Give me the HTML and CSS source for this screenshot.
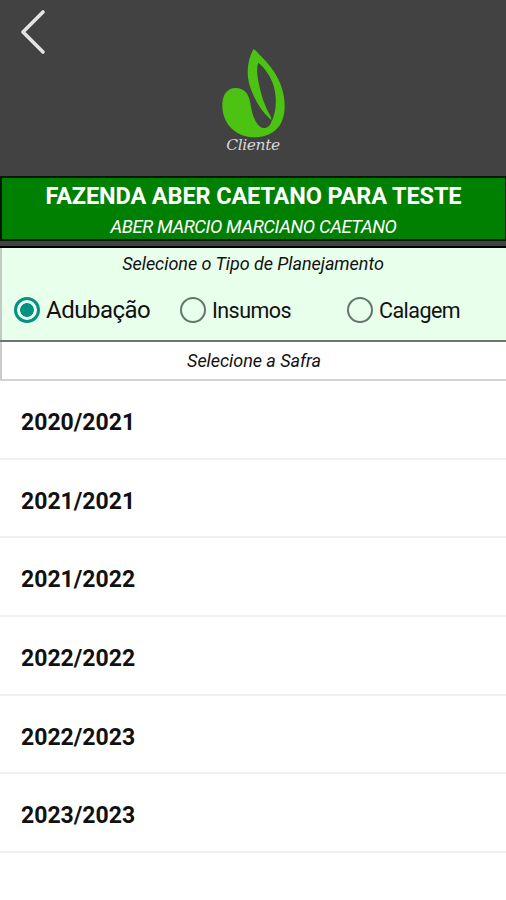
FILE: index.html
```html
<!DOCTYPE html>
<html lang="pt-BR">
  <head>
    <meta charset="UTF-8" />
    <meta name="viewport" content="width=device-width, initial-scale=1.0" />
    <title>Planejamento</title>
    <link rel="stylesheet" href="styles.css">
  </head>
  <body>
    <header class="header">
      <a class="back" href="#" aria-label="Voltar">
        <svg width="28" height="46" viewBox="0 0 28 46">
          <path d="M23 3 L3 23 L23 43" />
        </svg>
      </a>
      <div class="logo">
        <svg width="66" height="90" viewBox="60 39 198 270">
          <path fill-rule="evenodd" d="M161 41 C185 66 212 90 231 125 C253 165 259 212 250 246 C241 284 207 307 163 307 C112 307 68 271 67 213 C66 178 83 159 107 159 C134 159 147 178 151 205 C155 232 161 253 174 269 C185 283 204 284 213 264 C217 257 213 255 208 250 C180 224 158 184 147 145 C139 112 143 72 161 41 Z M175 83 C169 97 171 121 176 143 C183 177 193 211 211 242 C214 247 215 257 213 264 C229 233 232 192 221 153 C213 125 195 99 175 83 Z" />
        </svg>
        <span class="logo-text">Cliente</span>
      </div>
    </header>

    <section class="farm">
      <h1>FAZENDA ABER CAETANO PARA TESTE</h1>
      <p>ABER MARCIO MARCIANO CAETANO</p>
    </section>

    <form class="plan">
      <p class="plan-title">Selecione o Tipo de Planejamento</p>
      <div class="radio-group">
        <label class="large"><input type="radio" name="tipo" value="adubacao" checked /><span>Adubação</span></label>
        <label><input type="radio" name="tipo" value="insumos" /><span>Insumos</span></label>
        <label><input type="radio" name="tipo" value="calagem" /><span>Calagem</span></label>
      </div>
    </form>

    <p class="season-title"><span>Selecione a Safra</span></p>
    <ul class="seasons">
      <li>2020/2021</li>
      <li>2021/2021</li>
      <li>2021/2022</li>
      <li>2022/2022</li>
      <li>2022/2023</li>
      <li>2023/2023</li>
    </ul>
  </body>
</html>
```
FILE: styles.css
```css
* {
  box-sizing: border-box;
  margin: 0;
  padding: 0;
}

body {
  font-family: Roboto, sans-serif;
  background-color: #fff;
  color: #111;
}

.header {
  display: grid;
  grid-template-columns: 60px 1fr 60px;
  height: 176px;
  background-color: #424242;
}

.back {
  padding: 9px 0 0 20px;
}

.back svg {
  display: block;
  fill: none;
  stroke: #e4e4e4;
  stroke-width: 3.6;
  stroke-linecap: round;
  stroke-linejoin: round;
}

.logo {
  display: flex;
  flex-direction: column;
  align-items: center;
  padding-top: 48px;
}

.logo svg {
  fill: #4cc313;
}

.logo-text {
  margin-top: -2px;
  font: italic 15.5px/18px "DejaVu Serif", serif;
  letter-spacing: -0.4px;
  color: #d8d8d8;
}

.farm {
  height: 65px;
  padding-top: 6px;
  background-color: #008000;
  border: 2px solid #061806;
  border-right-width: 1px;
  text-align: center;
  color: #fff;
}

.farm h1 {
  font-size: 23.5px;
  line-height: 24px;
  font-weight: 700;
  letter-spacing: -0.12px;
}

.farm p {
  margin-top: 8px;
  font-size: 18.5px;
  line-height: 22px;
  font-style: italic;
  letter-spacing: -0.43px;
}

.plan {
  height: 101px;
  padding-top: 6px;
  background-color: #e8ffec;
  border-top: 5px solid #424242;
  border-bottom: 2px solid #6b776d;
  box-shadow: inset 0 2px #000, inset 2px 0 #c0cbc2;
}

.plan-title,
.season-title {
  font-size: 18px;
  line-height: 24px;
  font-style: italic;
  text-align: center;
  letter-spacing: -0.05px;
}

.radio-group {
  display: grid;
  grid-template-columns: 166px 167px 1fr;
  padding: 20px 0 0 14px;
}

.radio-group label {
  display: flex;
  align-items: center;
  height: 28px;
  font-size: 21.5px;
  letter-spacing: -0.55px;
}

.radio-group .large {
  font-size: 24px;
  letter-spacing: -0.5px;
}

.radio-group input {
  appearance: none;
  width: 26px;
  height: 26px;
  margin-right: 6px;
  border: 2px solid #66756a;
  border-radius: 50%;
}

.radio-group input:checked {
  border: 3px solid #079184;
  background: radial-gradient(circle, #079184 6.5px, transparent 7.2px);
}

.season-title {
  height: 39px;
  padding-top: 7px;
  border-left: 2px solid #ccc;
  border-bottom: 2px solid #d3d3d3;
}

.seasons {
  list-style: none;
}

.seasons li {
  height: 78.7px;
  padding: 28px 21px 0;
  border-bottom: 2px solid #f0f0f0;
  font-size: 23px;
  line-height: 28px;
  font-weight: 700;
}
```
